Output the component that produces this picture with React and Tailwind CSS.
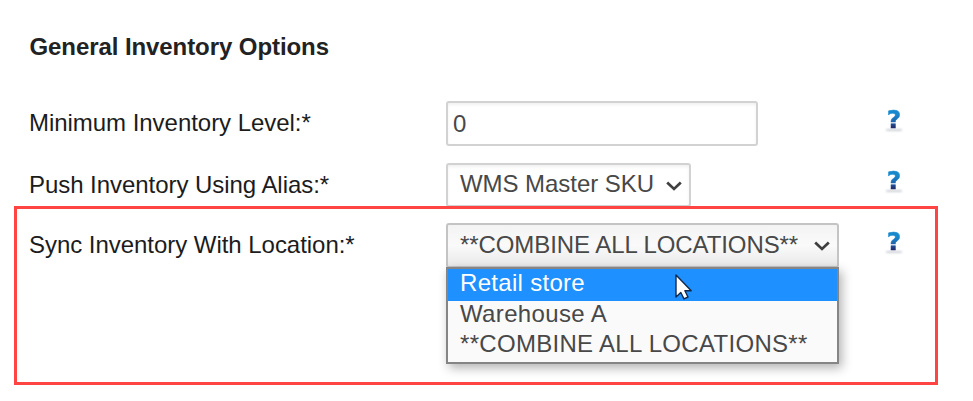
function HelpIcon() {
    return (
        <span
            title="Help"
            className="relative block h-[22px] w-4 text-center before:absolute before:bottom-0 before:left-0 before:h-[2px] before:w-full before:rounded-full before:bg-gray-400/50 before:blur-[1px]"
        >
            <span className="relative block bg-gradient-to-b from-[#1689cc] from-25% via-[#1f62ab] via-60% to-[#1f2a6b] to-85% bg-clip-text font-['DejaVu_Sans',sans-serif] text-[25px] leading-[22px] font-bold text-transparent [-webkit-text-stroke:0.5px_transparent]">
                ?
            </span>
        </span>
    );
}

function Chevron() {
    return (
        <svg viewBox="0 0 16 10" className="h-[10px] w-4" fill="none" stroke="#404040" strokeWidth="2.7">
            <path d="M1.2 1.4 8 7.9l6.8-6.5" />
        </svg>
    );
}

function Cursor() {
    return (
        <svg viewBox="0 0 17 26" className="absolute top-[5px] left-[227px] h-[26px] w-[17px]">
            <path
                d="M1 1v22l4.8-4.5 3.2 6.4 4-1.9-3.1-6.3h6.3z"
                fill="#fff"
                stroke="#13294a"
                strokeWidth="1.4"
                strokeLinejoin="round"
            />
        </svg>
    );
}

export default function App() {
    return (
        <div className="h-[401px] w-[973px] overflow-hidden bg-white font-['Liberation_Sans',Arial,sans-serif] text-2xl leading-7 text-[#1c1c1c]">
            <h2 className="h-[101px] pt-[33px] pl-[29.5px] font-bold tracking-[-0.08px] text-[#222]">General Inventory Options</h2>

            <div className="flex h-[62px] items-start pl-[29px]">
                <label className="w-[417px] pt-[8px] tracking-[-0.04px]">Minimum Inventory Level:*</label>
                <input
                    defaultValue="0"
                    className="h-[45px] w-[312px] rounded-[3px] border-2 border-[#d2d2d2] px-[5px] text-[#484848] shadow-[inset_0_2px_3px_rgba(0,0,0,0.06)]"
                />
                <div className="ml-[128px] pt-[8px]">
                    <HelpIcon />
                </div>
            </div>

            <div className="flex h-[43px] items-start pl-[29px]">
                <label className="w-[417px] pt-[8px] tracking-[-0.05px]">Push Inventory Using Alias:*</label>
                <div className="flex h-[44px] w-[245px] items-start justify-between rounded-[3px] border-2 border-[#d2d2d2] pt-[5px] pr-[7px] pl-3 text-[#484848] shadow-[inset_0_2px_3px_rgba(0,0,0,0.06)]">
                    <span className="tracking-[-0.05px]">WMS Master SKU</span>
                    <span className="pt-[11px]"><Chevron /></span>
                </div>
                <div className="ml-[195px] pt-[7px]">
                    <HelpIcon />
                </div>
            </div>

            <div className="relative ml-[14px] flex h-[179px] w-[924px] items-start border-3 border-[#ff4444] pt-[14px] pl-[12px]">
                <label className="w-[417px] pt-[8px] tracking-[-0.04px]">Sync Inventory With Location:*</label>
                <div className="relative w-[393px]">
                    <div className="flex h-[45px] items-start justify-between rounded-[3px] border-2 border-[#c4c4c4] bg-gradient-to-b from-[#f3f3f3] via-[#fafafa] to-[#e9e9e9] pt-[6px] pr-[7px] pl-3 text-[#484848]">
                        <span className="tracking-[-0.08px]">**COMBINE ALL LOCATIONS**</span>
                        <span className="pt-[10px]"><Chevron /></span>
                    </div>
                    <ul className="absolute top-[44px] left-0 h-[97px] w-[393px] border-2 border-[#858585] bg-[#fafafa] text-[#484848] shadow-[3px_4px_10px_rgba(0,0,0,0.3)]">
                        <li className="h-[32px] bg-[#1e90ff] pl-3 tracking-[0.3px] text-white">Retail store</li>
                        <li className="-mt-px h-[30px] pl-3 tracking-[0.35px]">Warehouse A</li>
                        <li className="h-[30px] pl-3 tracking-[0.3px]">**COMBINE ALL LOCATIONS**</li>
                        <Cursor />
                    </ul>
                </div>
                <div className="ml-[47px] pt-[8px]">
                    <HelpIcon />
                </div>
            </div>
        </div>
    );
}
